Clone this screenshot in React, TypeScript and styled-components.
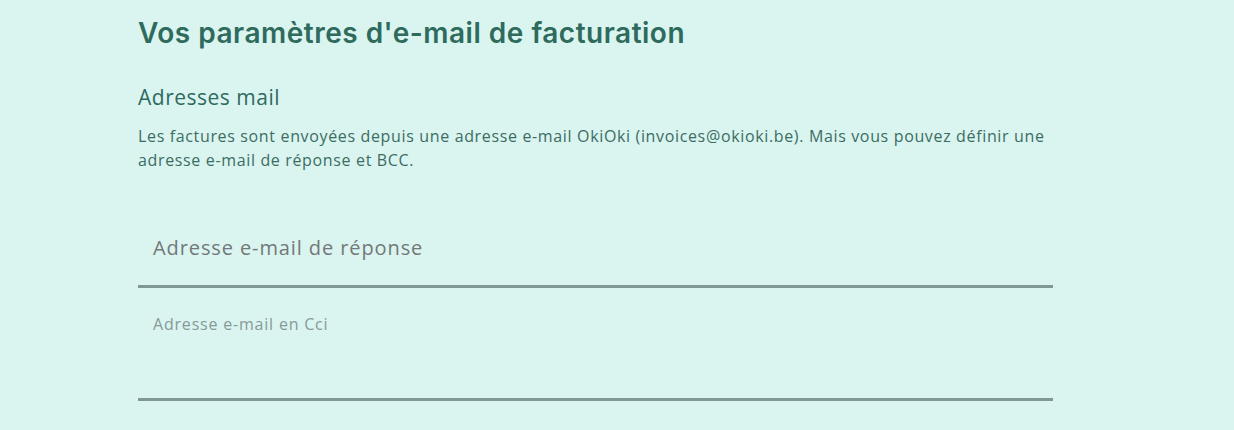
import React from "react";
import styled, { createGlobalStyle } from "styled-components";

const GlobalStyle = createGlobalStyle`
  html, body {
    margin: 0;
    padding: 0;
    background: #daf4f0;
  }
  body {
    font-family: "Open Sans", "Noto Sans", sans-serif;
  }
`;

const Page = styled.div`
  width: 1234px;
  height: 430px;
  overflow: hidden;
  background: #daf4f0;
  padding: 0 0 0 138px;
  box-sizing: border-box;
`;

const Section = styled.section`
  width: 915px;
  display: flex;
  flex-direction: column;
`;

const Title = styled.h1`
  margin: 15px 0 0;
  font-family: "Inter", sans-serif;
  font-weight: 600;
  font-size: 28px;
  line-height: 36px;
  letter-spacing: 0.5px;
  color: #2e6b5d;
`;

const SubTitle = styled.h2`
  margin: 32px 0 0;
  font-family: "Open Sans", sans-serif;
  font-weight: 400;
  font-size: 21px;
  line-height: 28px;
  letter-spacing: 0.5px;
  color: #2f6a5e;
`;

const Description = styled.p`
  margin: 13px 0 0;
  font-size: 16px;
  line-height: 24px;
  color: #3c6d63;
  letter-spacing: 0.65px;
`;

const Fields = styled.div`
  margin-top: 35px;
  display: flex;
  flex-direction: column;
`;

const Field = styled.label<{ $tall?: boolean }>`
  display: flex;
  flex-direction: column;
  height: ${(p) => (p.$tall ? "110px" : "78px")};
  border-bottom: 3px solid #809894;
  padding: 0 15px;
  box-sizing: content-box;
`;

const Placeholder = styled.span`
  margin-top: 27px;
  font-size: 20px;
  line-height: 28px;
  letter-spacing: 0.9px;
  color: #737878;
`;

const FloatingLabel = styled.span`
  margin-top: 25px;
  font-size: 16px;
  line-height: 22px;
  letter-spacing: 0.8px;
  color: #869a97;
`;

export default function App() {
  return (
    <>
      <GlobalStyle />
      <Page>
        <Section>
          <Title>Vos paramètres d'e-mail de facturation</Title>
          <SubTitle>Adresses mail</SubTitle>
          <Description>
            Les factures sont envoyées depuis une adresse e-mail OkiOki
            (invoices@okioki.be). Mais vous pouvez définir une adresse e-mail
            de réponse et BCC.
          </Description>
          <Fields>
            <Field>
              <Placeholder>Adresse e-mail de réponse</Placeholder>
            </Field>
            <Field $tall>
              <FloatingLabel>Adresse e-mail en Cci</FloatingLabel>
            </Field>
          </Fields>
        </Section>
      </Page>
    </>
  );
}
